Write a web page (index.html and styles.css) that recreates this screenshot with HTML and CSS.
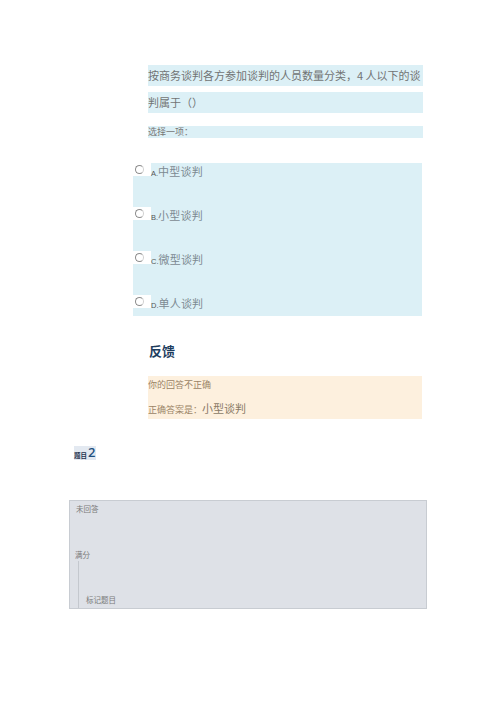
FILE: index.html
```html
<!DOCTYPE html>
<html lang="zh">
<head>
    <meta charset="UTF-8">
    <meta name="viewport" content="width=device-width, initial-scale=1.0">
    <title>题目</title>
    <link rel="stylesheet" href="styles.css">
</head>
<body>
    <div class="page">
        <div class="question">
            <p class="qline">按商务谈判各方参加谈判的人员数量分类，4 人以下的谈</p>
            <p class="qline">判属于（）</p>
            <p class="prompt">选择一项：</p>
        </div>

        <div class="answers">
            <div class="option">
                <span class="radio-wrap"><span class="radio"></span></span>
                <span class="letter">A.</span><span class="otext">中型谈判</span>
            </div>
            <div class="option">
                <span class="radio-wrap"><span class="radio"></span></span>
                <span class="letter">B.</span><span class="otext">小型谈判</span>
            </div>
            <div class="option">
                <span class="radio-wrap"><span class="radio"></span></span>
                <span class="letter">C.</span><span class="otext">微型谈判</span>
            </div>
            <div class="option">
                <span class="radio-wrap"><span class="radio"></span></span>
                <span class="letter">D.</span><span class="otext">单人谈判</span>
            </div>
        </div>

        <h2 class="fb-title">反馈</h2>
        <div class="feedback">
            <p class="fb-line">你的回答不正确</p>
            <p class="fb-line">正确答案是：<span class="fb-answer">小型谈判</span></p>
        </div>

        <div class="qno"><span class="qno-label">题目</span><span class="qno-num">2</span></div>

        <div class="info">
            <p class="state">未回答</p>
            <p class="grade">满分</p>
            <div class="flag">
                <span class="flag-text">标记题目</span>
            </div>
        </div>
    </div>
</body>
</html>
```

FILE: styles.css
```css
*{
    padding: 0;
    margin: 0;
    box-sizing: border-box;
}
body{
    background: #fff;
    font-family: "Noto Sans CJK SC", "DejaVu Sans", sans-serif;
    color: #666;
}
.page{
    width: 496px;
    height: 702px;
    padding-top: 65px;
}
.question{
    margin-left: 148px;
    width: 275px;
}
.qline{
    background: #dcf0f6;
    height: 21px;
    line-height: 21px;
    font-size: 11px;
    color: #727474;
    margin-bottom: 6px;
    white-space: nowrap;
}
.prompt{
    margin-top: 13px;
    background: #dcf0f6;
    height: 12px;
    line-height: 12px;
    font-size: 9px;
    color: #777;
}
.answers{
    margin-left: 133px;
    margin-top: 25px;
    width: 289px;
    height: 153px;
    background: #dcf0f6;
}
.option{
    display: flex;
    align-items: center;
    height: 16px;
    margin-bottom: 28px;
}
.option:last-child{
    margin-bottom: 0;
}
.radio-wrap{
    display: flex;
    align-items: center;
    width: 18px;
    height: 13px;
    background: #fff;
    align-self: flex-start;
}
.radio{
    width: 9px;
    height: 9px;
    margin-left: 2px;
    border: 1.5px solid #8c8c8c;
    border-right-color: #d0d0d0;
    border-radius: 50%;
}
.letter{
    font-family: "Liberation Sans", sans-serif;
    font-size: 7.5px;
    color: #555;
    margin-top: 4px;
}
.otext{
    font-size: 11px;
    color: #7c8a92;
    letter-spacing: 0.2px;
}
.fb-title{
    margin-left: 149px;
    margin-top: 25px;
    font-size: 13px;
    font-weight: bold;
    color: #1d3d5e;
    line-height: 20px;
}
.feedback{
    margin-left: 148px;
    margin-top: 15px;
    width: 274px;
    height: 43px;
    background: #fdf0de;
    padding-top: 2px;
}
.fb-line{
    font-size: 9px;
    color: #9a8466;
    line-height: 14px;
}
.fb-line + .fb-line{
    margin-top: 9px;
}
.fb-answer{
    font-size: 11px;
    color: #8a7a66;
}
.qno{
    margin-left: 74px;
    margin-top: 27px;
    display: inline-flex;
    align-items: flex-end;
    background: #e3e9f1;
    height: 14px;
    padding-right: 1px;
}
.qno-label{
    font-size: 6.5px;
    font-weight: bold;
    color: #1d3350;
    line-height: 10px;
}
.qno-num{
    font-family: "Open Sans", sans-serif;
    font-size: 13px;
    font-weight: 600;
    color: #22507e;
    line-height: 15px;
    margin-left: 1px;
}
.info{
    margin-left: 69px;
    margin-top: 37px;
    width: 358px;
    height: 109px;
    background: #dee1e7;
    border: 1px solid #c8ccd2;
    padding-left: 6px;
}
.state{
    font-size: 7.5px;
    color: #7a7a7a;
    line-height: 12px;
    margin-top: 2px;
}
.grade{
    font-size: 7.5px;
    color: #7a7a7a;
    line-height: 12px;
    margin-top: 34px;
    margin-left: -1px;
}
.flag{
    margin-left: 2px;
    border-left: 1px solid #c4c8ce;
    height: 47px;
    display: flex;
    align-items: flex-end;
    padding-left: 7px;
    padding-bottom: 2px;
}
.flag-text{
    font-size: 7.5px;
    color: #7a7a7a;
    line-height: 12px;
}
```
